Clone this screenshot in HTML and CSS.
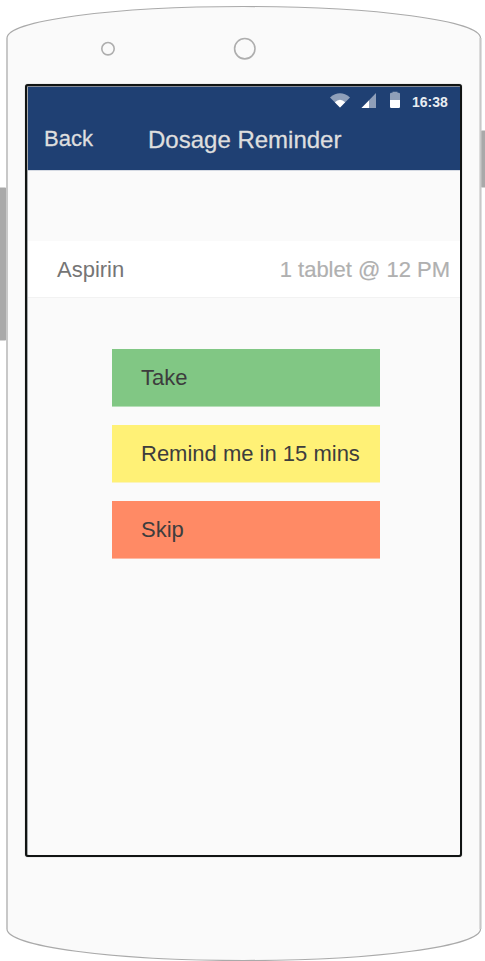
FILE: index.html
```html
<!DOCTYPE html>
<html lang="en">
<head>
<meta charset="utf-8">
<title>Dosage Reminder</title>
<link rel="stylesheet" href="styles.css">
</head>
<body>
<div class="phone">
  <svg class="shell" width="485" height="961" viewBox="0 0 485 961" aria-hidden="true">
    <rect x="-3" y="187.5" width="10" height="153" rx="2" fill="#a9a9a9"/>
    <rect x="480" y="130.500" width="9" height="57" rx="2" fill="#a9a9a9"/>
    <path d="M7 38A236.700 31.500 0 0 1 480.500 38V929A236.700 31.500 0 0 1 7 929Z" fill="#fafafa" stroke="#aaa" stroke-width="1.200"/>
    <path d="M7 38V929M480.500 38V929" stroke="#c8c8c8" stroke-width="2"/>
    <circle cx="108" cy="48.700" r="6.200" fill="none" stroke="#aeaeae" stroke-width="1.600"/>
    <circle cx="244.800" cy="48.700" r="10.200" fill="none" stroke="#aeaeae" stroke-width="1.600"/>
  </svg>
  <main class="screen">
    <header class="header">
      <div class="status">
        <svg width="72" height="18" viewBox="0 0 72 18" aria-hidden="true">
          <path d="M0 5.500Q10-2.800 20 5.500L10 15.500Z" fill="#8f9fb9"/>
          <path d="M4.800 10.200Q10 5.200 15.200 10.200L10 15.500Z" fill="#fff"/>
          <path d="M46 1V16H31.500Z" fill="#8f9fb9"/>
          <path d="M39 8.500V16H31.500Z" fill="#fff"/>
          <path d="M60 9V2Q60 .8 61.200 .8H62.500V-.2H67.500V.8H68.800Q70 .8 70 2V9Z" fill="#8f9fb9"/>
          <path d="M60 8H70V14.800Q70 16 68.800 16H61.200Q60 16 60 14.800Z" fill="#fff"/>
        </svg>
        <span class="time">16:38</span>
      </div>
      <nav class="bar">
        <span class="back">Back</span>
        <h1 class="title">Dosage Reminder</h1>
      </nav>
    </header>
    <section class="dose">
      <span>Aspirin</span>
      <span class="amount">1 tablet @ 12 PM</span>
    </section>
    <div class="actions">
      <button class="action take">Take</button>
      <button class="action remind">Remind me in 15 mins</button>
      <button class="action skip">Skip</button>
    </div>
  </main>
</div>
</body>
</html>
```

FILE: styles.css
```css
* {
  box-sizing: border-box;
}

body {
  margin: 0;
  background: #fff;
  font-family: "Liberation Sans", Arial, sans-serif;
  font-size: 22px;
}

.phone {
  position: relative;
  width: 485px;
  height: 961px;
  padding: 84px 0 0 25px;
  overflow: hidden;
}

.shell {
  position: absolute;
  inset: 0;
}

.screen {
  position: relative;
  width: 437px;
  height: 773px;
  padding: 1px 0 0 1px;
  border: 2px solid #111413;
  border-radius: 3px;
  background: #fafafa;
  box-shadow: inset 0 1px 0 #858b96, inset 1px 0 0 #a5a8aa, 0 0 1px #777;
}

.header {
  width: 432px;
  height: 84px;
  border-bottom: 1px solid #d5dae3;
  background: #1f4073;
  color: #dedede;
}

.status {
  display: flex;
  height: 28px;
  padding: 5px 0 0 302px;
}

.status svg {
  overflow: visible;
}

.time {
  margin-left: 10px;
  color: #e9edf2;
  font-size: 14px;
  font-weight: bold;
  line-height: 20px;
}

.bar {
  display: flex;
  align-items: flex-start;
  padding-left: 16px;
  -webkit-text-stroke: 0.3px #dedede;
}

.back {
  width: 104px;
  line-height: 48px;
}

.title {
  margin: 0;
  font-size: 24px;
  font-weight: normal;
  line-height: 50px;
}

.dose {
  display: flex;
  justify-content: space-between;
  width: 432px;
  height: 57px;
  margin-top: 70px;
  padding: 0 10px 0 29px;
  border-bottom: 1px solid #f2f2f2;
  background: #fff;
  color: #757575;
  line-height: 57px;
}

.amount {
  color: #b0b0b0;
  -webkit-text-stroke: 0.2px #b0b0b0;
}

.actions {
  display: grid;
  gap: 18px;
  width: 268px;
  margin: 51px 0 0 84px;
}

.action {
  height: 58px;
  padding: 0 0 0 29px;
  border: 0;
  border-bottom: 1px solid;
  color: #3d3d3d;
  font: inherit;
  line-height: 57px;
  text-align: left;
}

.take {
  border-color: #b5deb7;
  background: #81c784;
}

.remind {
  border-color: #fbf4bb;
  background: #fff176;
}

.skip {
  border-color: #fdb9a4;
  background: #ff8a65;
}
```
